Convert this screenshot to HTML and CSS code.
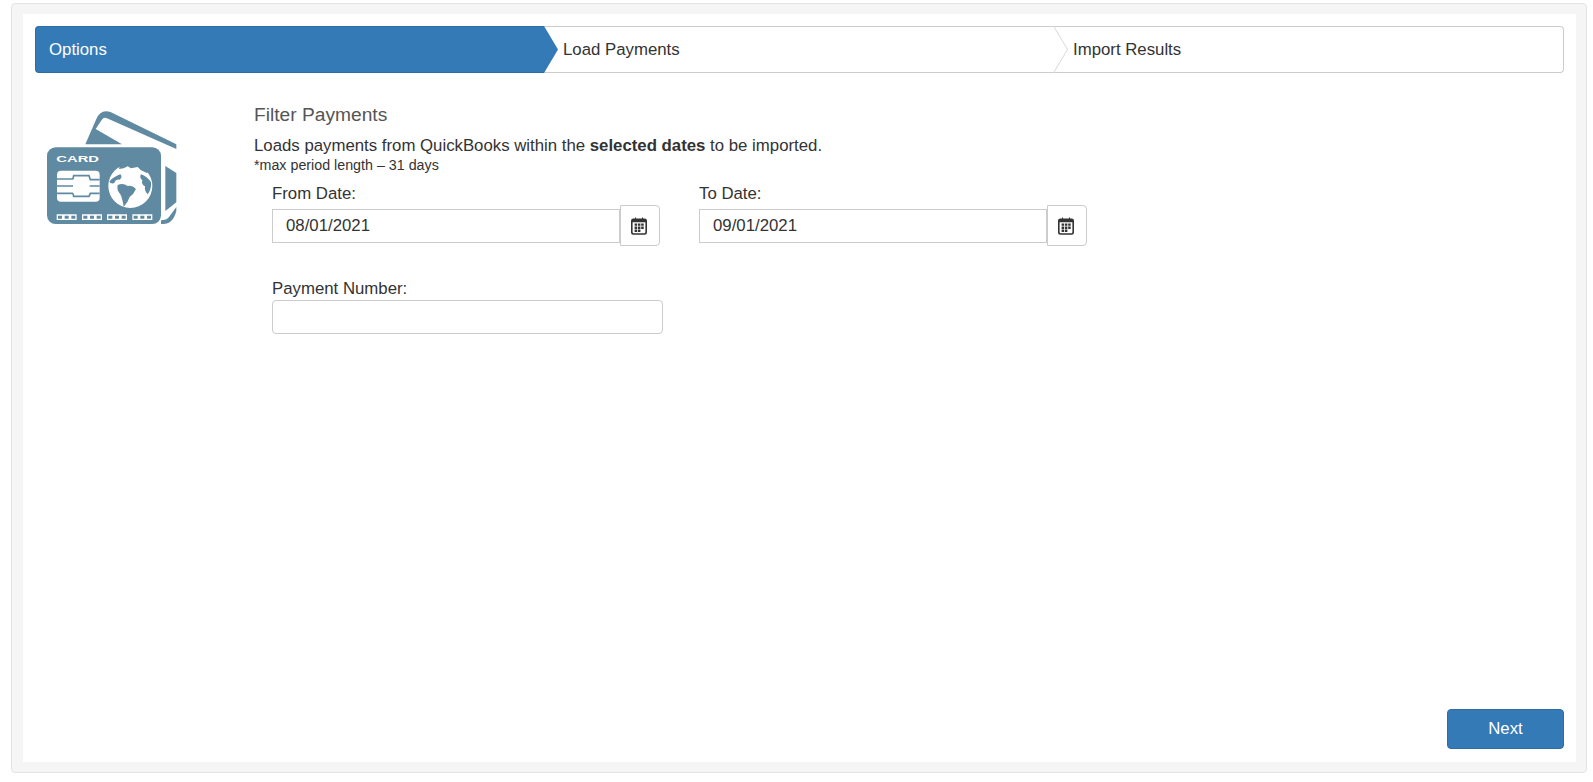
FILE: index.html
```html
<!DOCTYPE html>
<html lang="en">
<head>
<meta charset="utf-8">
<title>Filter Payments</title>
<link rel="stylesheet" href="styles.css">
</head>
<body>
<div class="well">
  <main class="panel">
    <nav class="wizard">
      <div class="step step-active">Options</div>
      <div class="step step-middle">Load Payments</div>
      <div class="step step-last">Import Results</div>
    </nav>
    <section class="content">
      <div class="icon-col">
        <svg class="card-icon" viewBox="20 18 390 342" width="130" height="114" aria-hidden="true">
          <path class="c-fill" d="M135 118 L168 42 Q182 10 212 22 L408 118 V132 L200 40 Q190 35 184 45 L166 72 L245 118 Z"/>
          <path class="c-fill" d="M375 183 L408 204 V292 L375 318 Z"/>
          <path class="c-fill" d="M408 306 V318 Q398 357 368 357 L362 357 V346 Q378 346 386 336 Z"/>
          <rect class="c-fill" x="20" y="127" width="342" height="230" rx="26"/>
          <text class="card-text" x="48" y="172" textLength="128" lengthAdjust="spacingAndGlyphs">CARD</text>
          <rect class="c-white" x="50" y="197" width="128" height="93" rx="12"/>
          <path class="c-line" d="M50 222 H98 M50 243 H98 M50 265 H98 M148 224 H178 M148 243 H178 M148 265 H178 M98 222 L100 212 H146 L150 224 M98 265 L100 274 H146 L150 265"/>
          <circle class="c-white" cx="270" cy="243" r="66"/>
          <path class="c-fill" d="M232 240 Q248 232 262 243 Q276 240 287 252 Q280 268 268 276 Q262 294 250 305 Q246 280 240 268 Q228 254 232 240 Z"/>
          <path class="c-fill" d="M207 230 Q218 216 240 208 Q248 216 238 224 Q226 222 222 234 Q212 238 207 230 Z"/>
          <path class="c-fill" d="M302 208 Q320 214 332 232 Q334 252 322 268 Q312 258 314 244 Q302 238 306 226 Q296 218 302 208 Z"/>
          <path class="c-fill" d="M236 192 L250 190 L262 184 L272 190 L292 186 L302 196 L320 204 L330 194 L290 170 L240 174 Z"/>
          <g class="c-digits">
            <path d="M51 330 h16 v13 h-16 z M71 330 h16 v13 h-16 z M91 330 h16 v13 h-16 z"/>
            <path d="M127 330 h16 v13 h-16 z M147 330 h16 v13 h-16 z M167 330 h16 v13 h-16 z"/>
            <path d="M202 330 h16 v13 h-16 z M222 330 h16 v13 h-16 z M242 330 h16 v13 h-16 z"/>
            <path d="M278 330 h16 v13 h-16 z M298 330 h16 v13 h-16 z M318 330 h16 v13 h-16 z"/>
          </g>
        </svg>
      </div>
      <div class="form-col">
        <h4 class="title">Filter Payments</h4>
        <p class="lead">Loads payments from QuickBooks within the <b>selected dates</b> to be imported.</p>
        <p class="note">*max period length – 31 days</p>
        <div class="fields">
          <div class="date-row">
            <div class="field">
              <label class="label" for="from">From Date:</label>
              <div class="date-group">
                <input class="input input-date" id="from" type="text" value="08/01/2021">
                <button class="cal-btn" type="button" aria-label="Pick date">
                  <svg class="cal-icon" viewBox="0 0 16 18" width="16" height="18" aria-hidden="true">
                    <path class="cal-body" fill-rule="evenodd" d="M2.5 1.5 H4 V0.4 H5 V1.5 H11 V0.4 H12 V1.5 H13.5 A2.4 2.4 0 0 1 16 3.8 V15.4 A2.4 2.4 0 0 1 13.5 17.8 H2.5 A2.4 2.4 0 0 1 0 15.4 V3.8 A2.4 2.4 0 0 1 2.5 1.5 Z M1.6 5.2 V15 A1.3 1.3 0 0 0 3 16.3 H13 A1.3 1.3 0 0 0 14.4 15 V5.2 Z"/>
                    <path class="cal-body" d="M3.6 6.4h2.5v2.4H3.6z M6.9 6.4h2.5v2.4H6.9z M10.2 6.4h2.5v2.4h-2.5z M3.6 9.5h2.5v2.4H3.6z M6.9 9.5h2.5v2.4H6.9z M10.2 9.5h2.5v2.4h-2.5z M3.6 12.6h2.5v2.4H3.6z M6.9 12.6h2.5v2.4H6.9z"/>
                  </svg>
                </button>
              </div>
            </div>
            <div class="field">
              <label class="label" for="to">To Date:</label>
              <div class="date-group">
                <input class="input input-date" id="to" type="text" value="09/01/2021">
                <button class="cal-btn" type="button" aria-label="Pick date">
                  <svg class="cal-icon" viewBox="0 0 16 18" width="16" height="18" aria-hidden="true">
                    <path class="cal-body" fill-rule="evenodd" d="M2.5 1.5 H4 V0.4 H5 V1.5 H11 V0.4 H12 V1.5 H13.5 A2.4 2.4 0 0 1 16 3.8 V15.4 A2.4 2.4 0 0 1 13.5 17.8 H2.5 A2.4 2.4 0 0 1 0 15.4 V3.8 A2.4 2.4 0 0 1 2.5 1.5 Z M1.6 5.2 V15 A1.3 1.3 0 0 0 3 16.3 H13 A1.3 1.3 0 0 0 14.4 15 V5.2 Z"/>
                    <path class="cal-body" d="M3.6 6.4h2.5v2.4H3.6z M6.9 6.4h2.5v2.4H6.9z M10.2 6.4h2.5v2.4h-2.5z M3.6 9.5h2.5v2.4H3.6z M6.9 9.5h2.5v2.4H6.9z M10.2 9.5h2.5v2.4h-2.5z M3.6 12.6h2.5v2.4H3.6z M6.9 12.6h2.5v2.4H6.9z"/>
                  </svg>
                </button>
              </div>
            </div>
          </div>
          <div class="field field-number">
            <label class="label" for="num">Payment Number:</label>
            <input class="input input-number" id="num" type="text">
          </div>
        </div>
      </div>
    </section>
    <footer class="actions">
      <button class="next-btn" type="button">Next</button>
    </footer>
  </main>
</div>
</body>
</html>
```
FILE: styles.css
```css
* { box-sizing: border-box; }
html, body { margin: 0; height: 100%; }
body {
  display: flex;
  padding: 3px 6px 9px 11px;
  font-family: "Liberation Sans", Arial, sans-serif;
  font-size: 16.8px;
  color: #333;
  background: #fff;
  overflow: hidden;
}
.well {
  flex: 1;
  display: flex;
  padding: 10px 10px 10px 11px;
  background: #f5f5f5;
  border: 1px solid #e3e3e3;
  border-radius: 4px;
}
.panel {
  flex: 1;
  display: flex;
  flex-direction: column;
  padding: 12px 12px 13px;
  background: #fff;
}
.wizard { display: flex; height: 47px; }
.step {
  position: relative;
  display: flex;
  align-items: center;
  padding-left: 19px;
  border-top: 1px solid #ccc;
  border-bottom: 1px solid #ccc;
  color: #333;
}
.step-active {
  flex: 0 0 509px;
  padding-left: 13px;
  color: #fff;
  background: #337ab7;
  border-color: #2e6da4;
  border-left: 1px solid #2e6da4;
  border-radius: 4px 0 0 4px;
}
.step-active::after {
  content: "";
  position: absolute;
  z-index: 2;
  top: -1px;
  left: 100%;
  width: 14px;
  height: 47px;
  background: #337ab7;
  clip-path: polygon(0 0, 100% 50%, 0 100%);
}
.step-middle { flex: 0 0 510px; }
.step-middle::before,
.step-middle::after {
  content: "";
  position: absolute;
  top: -1px;
  width: 14px;
  height: 47px;
  clip-path: polygon(0 0, 100% 50%, 0 100%);
}
.step-middle::before { left: 100%; background: #d8d8d8; }
.step-middle::after { left: calc(100% - 1px); background: #fff; }
.step-last {
  flex: 1;
  border-right: 1px solid #ccc;
  border-radius: 0 4px 4px 0;
}
.content { display: flex; padding-top: 32px; }
.icon-col { flex: 0 0 219px; padding: 6px 0 0 12px; }
.card-icon { display: block; }
.c-fill { fill: #5f8aa2; }
.c-white { fill: #fff; }
.c-line { fill: none; stroke: #5f8aa2; stroke-width: 5; }
.c-digits path { fill: #5f8aa2; stroke: #fff; stroke-width: 4; }
.card-text { fill: #fff; font: bold 27px "Liberation Sans", Arial, sans-serif; }
.form-col { flex: 1; }
.title {
  margin: 0;
  font-size: 19.2px;
  font-weight: 400;
  line-height: 20px;
  color: #555;
}
.lead { margin: 10px 0 0; line-height: 22px; }
.note { margin: 0; font-size: 14.28px; line-height: 17px; }
.fields { margin: 9px 0 0 18px; }
.date-row { display: flex; }
.field { display: flex; flex-direction: column; }
.date-row .field { flex: 0 0 427px; }
.label { line-height: 22px; }
.date-group { display: flex; align-items: center; height: 41px; }
.input {
  height: 34px;
  padding: 0 13px;
  font: inherit;
  color: #333;
  background: #fff;
  border: 1px solid #ccc;
  outline: none;
}
.input-date { width: 348px; }
.cal-btn {
  display: flex;
  align-items: center;
  justify-content: center;
  width: 40px;
  height: 41px;
  padding: 0 2px 0 0;
  background: #fff;
  border: 1px solid #ccc;
  border-radius: 0 4px 4px 0;
}
.cal-icon { display: block; }
.cal-body { fill: #333; }
.field-number { margin-top: 32px; }
.input-number { width: 391px; border-radius: 4px; }
.actions { margin-top: auto; display: flex; justify-content: flex-end; }
.next-btn {
  width: 117px;
  height: 40px;
  font: inherit;
  color: #fff;
  background: #337ab7;
  border: 1px solid #2e6da4;
  border-radius: 4px;
}
```
